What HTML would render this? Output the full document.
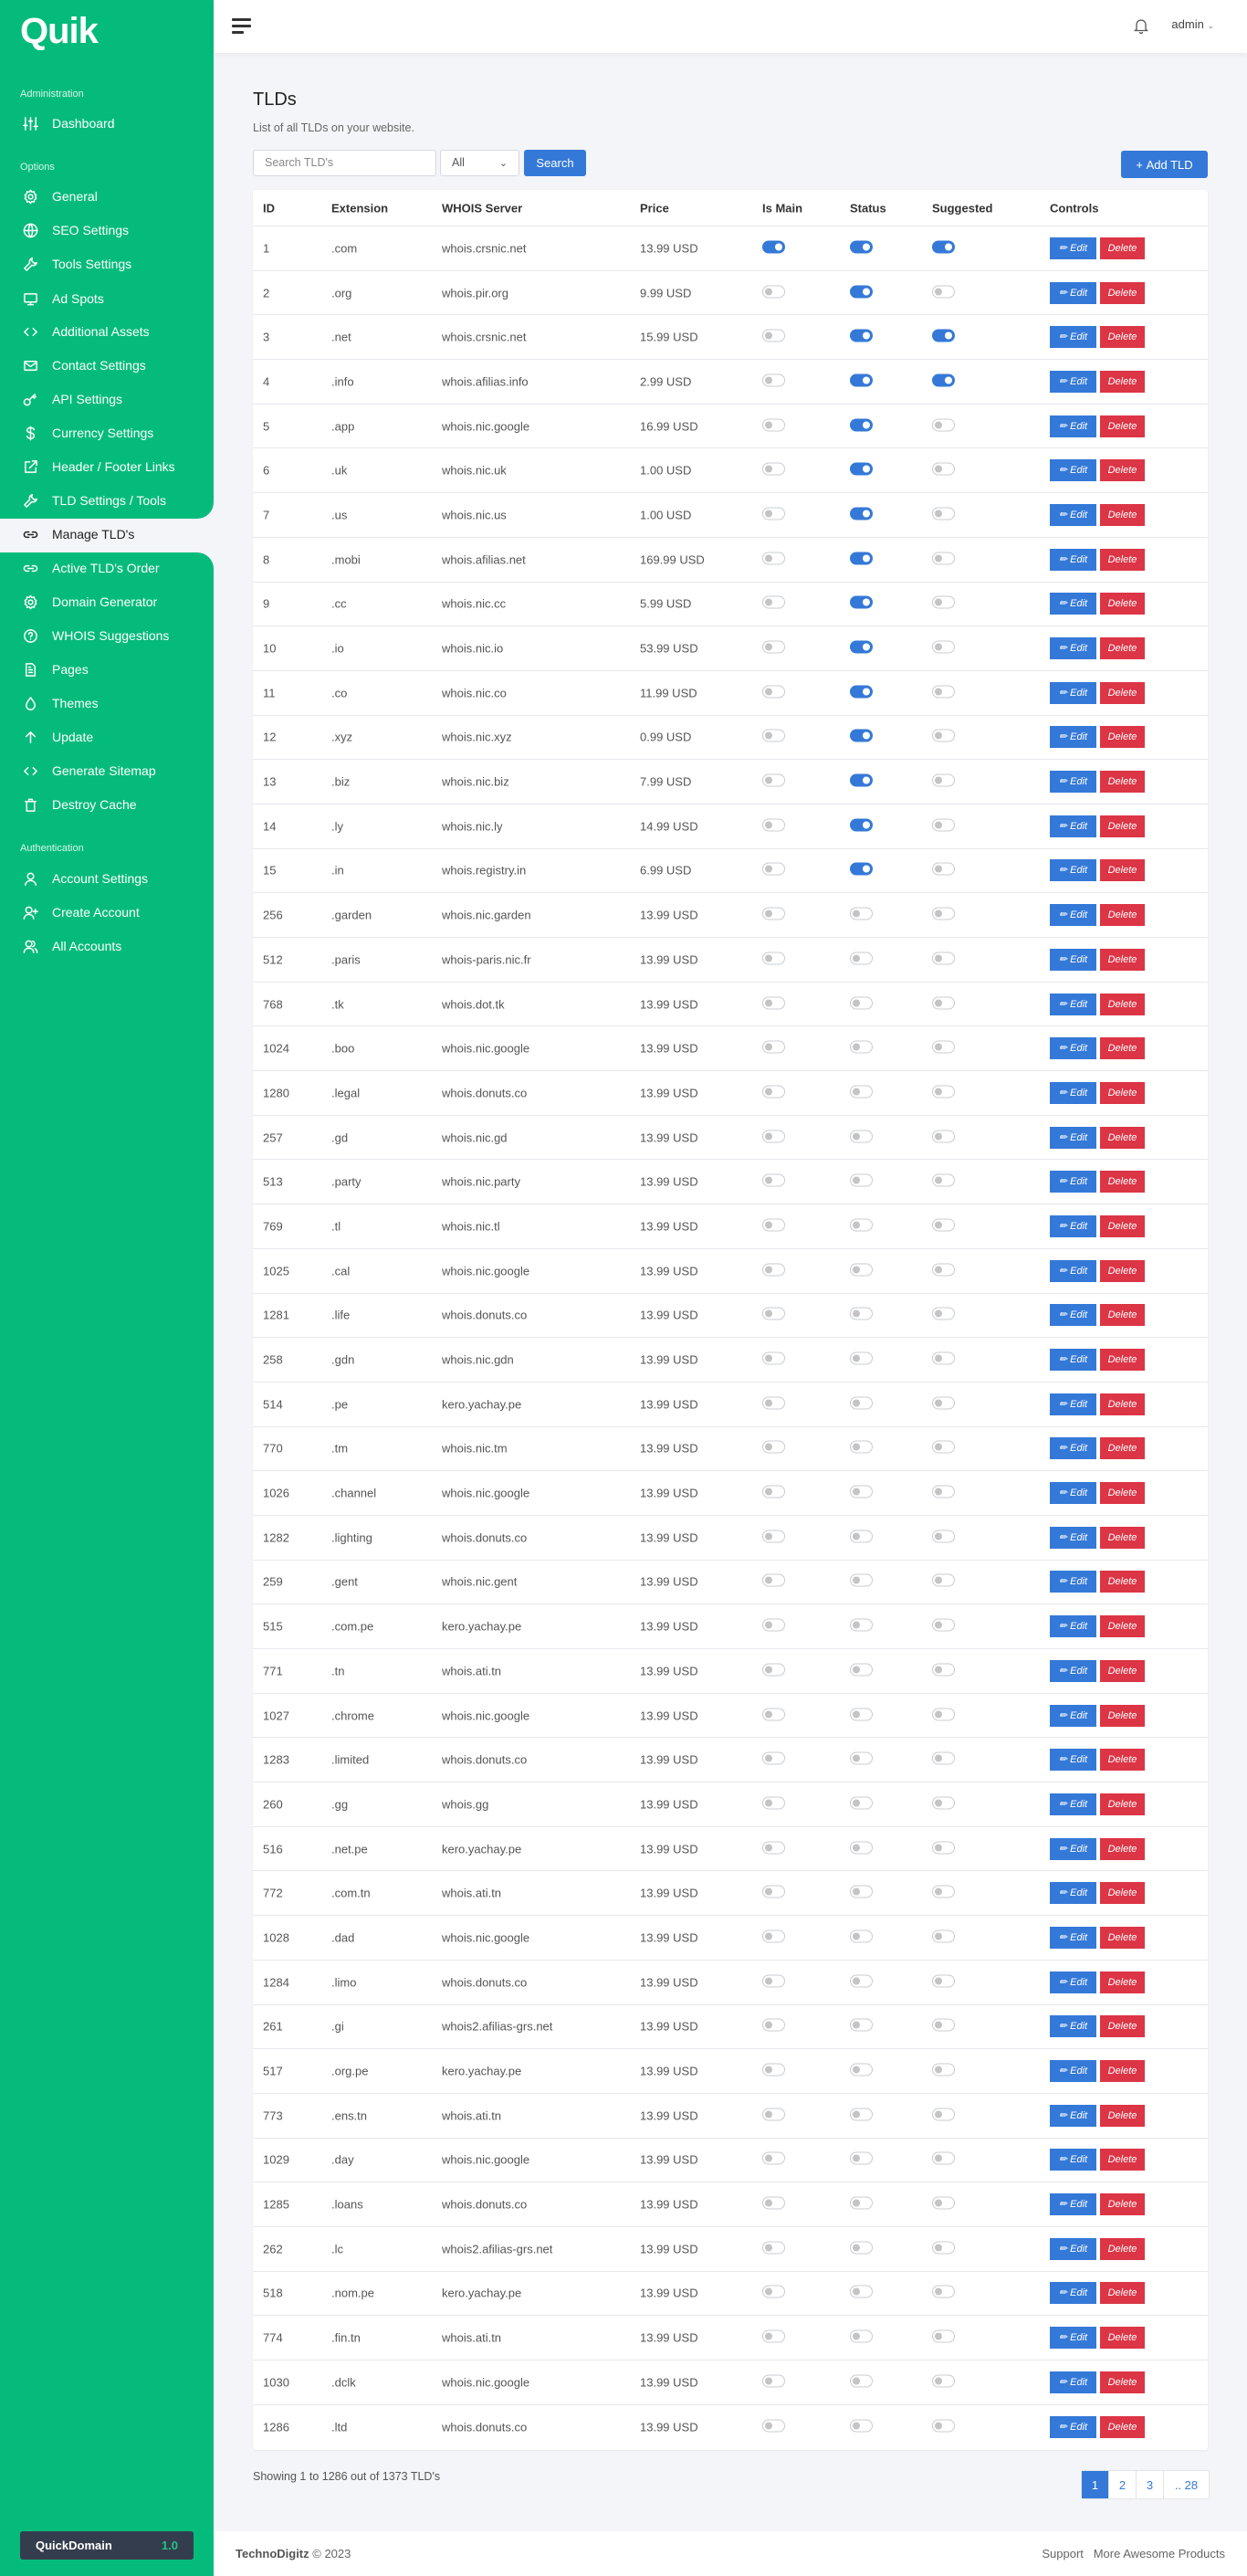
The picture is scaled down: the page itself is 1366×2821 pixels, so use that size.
<!DOCTYPE html>
<html><head><meta charset="utf-8">
<style>
*{box-sizing:border-box;margin:0;padding:0}
body{width:1366px;height:2821px;font-family:"Liberation Sans",sans-serif;background:#f4f5f8;position:relative;overflow:hidden;color:#444}
.side{position:absolute;left:0;top:0;width:234px;height:2821px;background:#f4f5f8}
.g1{position:absolute;left:0;top:0;width:234px;height:568px;background:#05bb7c;border-bottom-right-radius:18px}
.g2{position:absolute;left:0;top:605px;width:234px;height:2216px;background:#05bb7c;border-top-right-radius:18px}
.logo{position:absolute;left:22px;top:12px;font-size:40px;font-weight:bold;color:#fff;letter-spacing:-1px}
.lbl{position:absolute;left:22px;font-size:11px;color:#d8f5ea}
.it{position:absolute;left:25px;height:20px;font-size:14px;color:#fff;display:flex;align-items:center}
.it svg{width:17px;height:17px;margin-right:15px;fill:none;stroke:#fff;stroke-width:1.6;stroke-linecap:round;stroke-linejoin:round}
.it.act{color:#222}.it.act svg{stroke:#222}
.badge{position:absolute;left:22px;top:2772px;width:190px;height:31px;background:#343d4d;border-radius:3px;color:#fff;font-size:13px;font-weight:bold;display:flex;align-items:center;justify-content:space-between;padding:0 17px 0 17px}
.badge span{color:#22c38a}
.top{position:absolute;left:234px;top:0;width:1132px;height:58px;background:#fff;box-shadow:0 2px 6px rgba(0,0,0,.05)}
.ham{position:absolute;left:20px;top:20px}
.ham i{display:block;height:2.5px;background:#333;margin-bottom:4.5px;border-radius:1px}
.admin{position:absolute;right:36px;top:19px;font-size:13px;color:#444}
.bell{position:absolute;right:108px;top:19px}
h1{position:absolute;left:277px;top:98px;font-size:20px;font-weight:normal;color:#222}
.sub{position:absolute;left:277px;top:133px;font-size:12.5px;color:#666}
.inp{position:absolute;left:277px;top:164px;width:201px;height:29px;background:#fff;border:1px solid #d5d9df;border-radius:3px;font-size:12.5px;color:#888;padding:6px 12px}
.sel{position:absolute;left:482px;top:164px;width:87px;height:29px;background:#fff;border:1px solid #d5d9df;border-radius:3px;font-size:12.5px;color:#555;padding:6px 12px}
.sel b{position:absolute;right:12px;top:7px;font-weight:normal;font-size:11px}
.btn{position:absolute;background:#3479d8;color:#fff;border-radius:3px;font-size:13px;display:flex;align-items:center;justify-content:center}
.card{position:absolute;left:277px;top:208px;width:1046px;height:2475px;background:#fff;border-radius:3px;box-shadow:0 1px 2px rgba(0,0,0,.05)}
.hr{position:relative;height:40px;border-bottom:1px solid #e6e8ec;font-size:13px;font-weight:bold;color:#333}
.r{position:relative;height:48.7px;border-bottom:1px solid #e6e8ec;font-size:13px;color:#555}
.r:last-child{border-bottom:none}
.hr span,.r span{position:absolute;top:50%;transform:translateY(-50%);white-space:nowrap}
.c1{left:11px}.c2{left:86px}.c3{left:207px}.c4{left:424px}.c5{left:558px}.c6{left:654px}.c7{left:744px}.c8{left:873px}
.t{display:inline-block;width:25px;height:14px;border-radius:7px;border:1px solid #c9ccd1;background:#fff;position:relative}
.t::after{content:"";position:absolute;left:2px;top:2px;width:8px;height:8px;border-radius:50%;background:#c4c4c4}
.t.on{background:#3479d8;border-color:#3479d8}
.t.on::after{left:13px;background:#fff}
.ed,.de{display:inline-block;height:24px;line-height:24px;font-size:11px;color:#fff;vertical-align:middle;text-align:center}
.ed{width:51px;background:#3479d8}
.de{width:49px;background:#dc3545;margin-left:4px}
.show{position:absolute;left:277px;top:2705px;font-size:12.5px;color:#555}
.pg{position:absolute;left:1184px;top:2705px;height:32px;display:flex;border:1px solid #e1e4e8;border-radius:3px;background:#fff;font-size:13px;color:#3479d8}
.pg div{width:30px;display:flex;align-items:center;justify-content:center;border-left:1px solid #e1e4e8}
.pg div:first-child{background:#3479d8;color:#fff;border:none;width:29px}
.pg div:last-child{width:50px}
.foot{position:absolute;left:234px;top:2772px;width:1132px;height:49px;background:#fff;font-size:13px;color:#666}
</style></head><body>
<div class="side">
<div class="g1"></div><div class="g2"></div>
<div class="logo">Quik</div>
<div class="lbl" style="top:97px">Administration</div>
<div class="it" style="top:125px"><svg viewBox="0 0 18 18"><path d="M3 2v14M9 2v14M15 2v14M1 11h4M7 6h4M13 12h4"/></svg>Dashboard</div>
<div class="lbl" style="top:177px">Options</div>
<div class="it" style="top:205px"><svg viewBox="0 0 18 18"><circle cx="9" cy="9" r="2.5"/><path d="M9 1.5l1.5 2 2.5-.5.5 2.5 2 1.5-1 2 1 2-2 1.5-.5 2.5-2.5-.5L9 16.5l-1.5-2-2.5.5-.5-2.5-2-1.5 1-2-1-2 2-1.5.5-2.5 2.5.5z"/></svg>General</div>
<div class="it" style="top:242px"><svg viewBox="0 0 18 18"><circle cx="9" cy="9" r="7.5"/><path d="M1.5 9h15M9 1.5c3 3 3 12 0 15M9 1.5c-3 3-3 12 0 15"/></svg>SEO Settings</div>
<div class="it" style="top:279px"><svg viewBox="0 0 18 18"><path d="M11 2a4 4 0 0 0-3 5.5L2 13.5 4.5 16l6-6A4 4 0 0 0 16 7l-2.5 1L10 4.5z"/></svg>Tools Settings</div>
<div class="it" style="top:317px"><svg viewBox="0 0 18 18"><rect x="2" y="3" width="14" height="9.5" rx="1"/><path d="M9 12.5V15.5M6 15.5h6"/></svg>Ad Spots</div>
<div class="it" style="top:353px"><svg viewBox="0 0 18 18"><path d="M6 5L2 9l4 4M12 5l4 4-4 4"/></svg>Additional Assets</div>
<div class="it" style="top:390px"><svg viewBox="0 0 18 18"><rect x="2" y="4" width="14" height="10" rx="1"/><path d="M2 5l7 5 7-5"/></svg>Contact Settings</div>
<div class="it" style="top:427px"><svg viewBox="0 0 18 18"><circle cx="5" cy="12" r="3.5"/><path d="M7.5 9.5L14 3M11.5 5.5l2 2M13 4l2 2"/></svg>API Settings</div>
<div class="it" style="top:464px"><svg viewBox="0 0 18 18"><path d="M9 1.5v15M13 5c0-1.5-2-2.5-4-2.5S5 3.5 5 5.5 7 8 9 8.5s4 1 4 3.5-2 3-4 3-4-1-4-2.5"/></svg>Currency Settings</div>
<div class="it" style="top:501px"><svg viewBox="0 0 18 18"><path d="M8 3H3v12h12v-5M11 2h5v5M16 2L8 10"/></svg>Header / Footer Links</div>
<div class="it" style="top:538px"><svg viewBox="0 0 18 18"><path d="M11 2a4 4 0 0 0-3 5.5L2 13.5 4.5 16l6-6A4 4 0 0 0 16 7l-2.5 1L10 4.5z"/></svg>TLD Settings / Tools</div>
<div class="it act" style="top:575px"><svg viewBox="0 0 18 18"><path d="M7 6H4.5a3 3 0 0 0 0 6H7M11 6h2.5a3 3 0 0 1 0 6H11M6 9h6"/></svg>Manage TLD's</div>
<div class="it" style="top:612px"><svg viewBox="0 0 18 18"><path d="M7 6H4.5a3 3 0 0 0 0 6H7M11 6h2.5a3 3 0 0 1 0 6H11M6 9h6"/></svg>Active TLD's Order</div>
<div class="it" style="top:649px"><svg viewBox="0 0 18 18"><circle cx="9" cy="9" r="2.5"/><path d="M9 1.5l1.5 2 2.5-.5.5 2.5 2 1.5-1 2 1 2-2 1.5-.5 2.5-2.5-.5L9 16.5l-1.5-2-2.5.5-.5-2.5-2-1.5 1-2-1-2 2-1.5.5-2.5 2.5.5z"/></svg>Domain Generator</div>
<div class="it" style="top:686px"><svg viewBox="0 0 18 18"><circle cx="9" cy="9" r="7"/><path d="M7 7a2 2 0 1 1 2.5 2c-.5.2-.5.8-.5 1.5M9 12.8v.2"/></svg>WHOIS Suggestions</div>
<div class="it" style="top:723px"><svg viewBox="0 0 18 18"><path d="M4 2h7l3 3v11H4zM7 9h4M7 12h4M7 6h2"/></svg>Pages</div>
<div class="it" style="top:760px"><svg viewBox="0 0 18 18"><path d="M9 2C7 5 4 8 4 11a5 5 0 0 0 10 0c0-3-3-6-5-9z"/></svg>Themes</div>
<div class="it" style="top:797px"><svg viewBox="0 0 18 18"><path d="M9 15V3M4 8l5-5 5 5"/></svg>Update</div>
<div class="it" style="top:834px"><svg viewBox="0 0 18 18"><path d="M6 5L2 9l4 4M12 5l4 4-4 4"/></svg>Generate Sitemap</div>
<div class="it" style="top:871px"><svg viewBox="0 0 18 18"><path d="M3 5h12M4.5 5v11h9V5M7 5V2.5h4V5"/></svg>Destroy Cache</div>
<div class="lbl" style="top:923px">Authentication</div>
<div class="it" style="top:952px"><svg viewBox="0 0 18 18"><circle cx="9" cy="6" r="3.5"/><path d="M3 16c0-3 3-5 6-5s6 2 6 5"/></svg>Account Settings</div>
<div class="it" style="top:989px"><svg viewBox="0 0 18 18"><circle cx="7" cy="6" r="3.5"/><path d="M1.5 16c0-3 2.5-5 5.5-5s5.5 2 5.5 5M14.5 5v5M12 7.5h5"/></svg>Create Account</div>
<div class="it" style="top:1026px"><svg viewBox="0 0 18 18"><circle cx="7" cy="6" r="3.5"/><path d="M1.5 16c0-3 2.5-5 5.5-5s5.5 2 5.5 5M11.5 2.8a3.5 3.5 0 0 1 0 6.5M14 11.5c1.5.7 2.5 2.3 2.5 4.5"/></svg>All Accounts</div>
<div class="badge">QuickDomain<span>1.0</span></div>
</div>
<div class="top">
<div class="ham"><i style="width:21px"></i><i style="width:21px"></i><i style="width:13px"></i></div>
<svg class="bell" width="16" height="18" viewBox="0 0 16 18" fill="none" stroke="#555" stroke-width="1.3"><path d="M3 13V8a5 5 0 0 1 10 0v5l1.5 1.5h-13zM6.5 16a1.5 1.5 0 0 0 3 0"/></svg>
<div class="admin">admin <span style="font-size:9px;color:#777">&#8964;</span></div>
</div>
<h1>TLDs</h1>
<div class="sub">List of all TLDs on your website.</div>
<div class="inp">Search TLD's</div>
<div class="sel">All<b>&#8964;</b></div>
<div class="btn" style="left:574px;top:164px;width:68px;height:29px">Search</div>
<div class="btn" style="left:1228px;top:165px;width:95px;height:30px">+&nbsp;Add TLD</div>
<div class="card">
<div class="hr"><span class="c1">ID</span><span class="c2">Extension</span><span class="c3">WHOIS Server</span><span class="c4">Price</span><span class="c5">Is Main</span><span class="c6">Status</span><span class="c7">Suggested</span><span class="c8">Controls</span></div>
<div class="r"><span class="c1">1</span><span class="c2">.com</span><span class="c3">whois.crsnic.net</span><span class="c4">13.99 USD</span><span class="c5"><i class="t on"></i></span><span class="c6"><i class="t on"></i></span><span class="c7"><i class="t on"></i></span><span class="c8"><i class="ed">&#9999;&#xFE0E; Edit</i><i class="de">Delete</i></span></div>
<div class="r"><span class="c1">2</span><span class="c2">.org</span><span class="c3">whois.pir.org</span><span class="c4">9.99 USD</span><span class="c5"><i class="t"></i></span><span class="c6"><i class="t on"></i></span><span class="c7"><i class="t"></i></span><span class="c8"><i class="ed">&#9999;&#xFE0E; Edit</i><i class="de">Delete</i></span></div>
<div class="r"><span class="c1">3</span><span class="c2">.net</span><span class="c3">whois.crsnic.net</span><span class="c4">15.99 USD</span><span class="c5"><i class="t"></i></span><span class="c6"><i class="t on"></i></span><span class="c7"><i class="t on"></i></span><span class="c8"><i class="ed">&#9999;&#xFE0E; Edit</i><i class="de">Delete</i></span></div>
<div class="r"><span class="c1">4</span><span class="c2">.info</span><span class="c3">whois.afilias.info</span><span class="c4">2.99 USD</span><span class="c5"><i class="t"></i></span><span class="c6"><i class="t on"></i></span><span class="c7"><i class="t on"></i></span><span class="c8"><i class="ed">&#9999;&#xFE0E; Edit</i><i class="de">Delete</i></span></div>
<div class="r"><span class="c1">5</span><span class="c2">.app</span><span class="c3">whois.nic.google</span><span class="c4">16.99 USD</span><span class="c5"><i class="t"></i></span><span class="c6"><i class="t on"></i></span><span class="c7"><i class="t"></i></span><span class="c8"><i class="ed">&#9999;&#xFE0E; Edit</i><i class="de">Delete</i></span></div>
<div class="r"><span class="c1">6</span><span class="c2">.uk</span><span class="c3">whois.nic.uk</span><span class="c4">1.00 USD</span><span class="c5"><i class="t"></i></span><span class="c6"><i class="t on"></i></span><span class="c7"><i class="t"></i></span><span class="c8"><i class="ed">&#9999;&#xFE0E; Edit</i><i class="de">Delete</i></span></div>
<div class="r"><span class="c1">7</span><span class="c2">.us</span><span class="c3">whois.nic.us</span><span class="c4">1.00 USD</span><span class="c5"><i class="t"></i></span><span class="c6"><i class="t on"></i></span><span class="c7"><i class="t"></i></span><span class="c8"><i class="ed">&#9999;&#xFE0E; Edit</i><i class="de">Delete</i></span></div>
<div class="r"><span class="c1">8</span><span class="c2">.mobi</span><span class="c3">whois.afilias.net</span><span class="c4">169.99 USD</span><span class="c5"><i class="t"></i></span><span class="c6"><i class="t on"></i></span><span class="c7"><i class="t"></i></span><span class="c8"><i class="ed">&#9999;&#xFE0E; Edit</i><i class="de">Delete</i></span></div>
<div class="r"><span class="c1">9</span><span class="c2">.cc</span><span class="c3">whois.nic.cc</span><span class="c4">5.99 USD</span><span class="c5"><i class="t"></i></span><span class="c6"><i class="t on"></i></span><span class="c7"><i class="t"></i></span><span class="c8"><i class="ed">&#9999;&#xFE0E; Edit</i><i class="de">Delete</i></span></div>
<div class="r"><span class="c1">10</span><span class="c2">.io</span><span class="c3">whois.nic.io</span><span class="c4">53.99 USD</span><span class="c5"><i class="t"></i></span><span class="c6"><i class="t on"></i></span><span class="c7"><i class="t"></i></span><span class="c8"><i class="ed">&#9999;&#xFE0E; Edit</i><i class="de">Delete</i></span></div>
<div class="r"><span class="c1">11</span><span class="c2">.co</span><span class="c3">whois.nic.co</span><span class="c4">11.99 USD</span><span class="c5"><i class="t"></i></span><span class="c6"><i class="t on"></i></span><span class="c7"><i class="t"></i></span><span class="c8"><i class="ed">&#9999;&#xFE0E; Edit</i><i class="de">Delete</i></span></div>
<div class="r"><span class="c1">12</span><span class="c2">.xyz</span><span class="c3">whois.nic.xyz</span><span class="c4">0.99 USD</span><span class="c5"><i class="t"></i></span><span class="c6"><i class="t on"></i></span><span class="c7"><i class="t"></i></span><span class="c8"><i class="ed">&#9999;&#xFE0E; Edit</i><i class="de">Delete</i></span></div>
<div class="r"><span class="c1">13</span><span class="c2">.biz</span><span class="c3">whois.nic.biz</span><span class="c4">7.99 USD</span><span class="c5"><i class="t"></i></span><span class="c6"><i class="t on"></i></span><span class="c7"><i class="t"></i></span><span class="c8"><i class="ed">&#9999;&#xFE0E; Edit</i><i class="de">Delete</i></span></div>
<div class="r"><span class="c1">14</span><span class="c2">.ly</span><span class="c3">whois.nic.ly</span><span class="c4">14.99 USD</span><span class="c5"><i class="t"></i></span><span class="c6"><i class="t on"></i></span><span class="c7"><i class="t"></i></span><span class="c8"><i class="ed">&#9999;&#xFE0E; Edit</i><i class="de">Delete</i></span></div>
<div class="r"><span class="c1">15</span><span class="c2">.in</span><span class="c3">whois.registry.in</span><span class="c4">6.99 USD</span><span class="c5"><i class="t"></i></span><span class="c6"><i class="t on"></i></span><span class="c7"><i class="t"></i></span><span class="c8"><i class="ed">&#9999;&#xFE0E; Edit</i><i class="de">Delete</i></span></div>
<div class="r"><span class="c1">256</span><span class="c2">.garden</span><span class="c3">whois.nic.garden</span><span class="c4">13.99 USD</span><span class="c5"><i class="t"></i></span><span class="c6"><i class="t"></i></span><span class="c7"><i class="t"></i></span><span class="c8"><i class="ed">&#9999;&#xFE0E; Edit</i><i class="de">Delete</i></span></div>
<div class="r"><span class="c1">512</span><span class="c2">.paris</span><span class="c3">whois-paris.nic.fr</span><span class="c4">13.99 USD</span><span class="c5"><i class="t"></i></span><span class="c6"><i class="t"></i></span><span class="c7"><i class="t"></i></span><span class="c8"><i class="ed">&#9999;&#xFE0E; Edit</i><i class="de">Delete</i></span></div>
<div class="r"><span class="c1">768</span><span class="c2">.tk</span><span class="c3">whois.dot.tk</span><span class="c4">13.99 USD</span><span class="c5"><i class="t"></i></span><span class="c6"><i class="t"></i></span><span class="c7"><i class="t"></i></span><span class="c8"><i class="ed">&#9999;&#xFE0E; Edit</i><i class="de">Delete</i></span></div>
<div class="r"><span class="c1">1024</span><span class="c2">.boo</span><span class="c3">whois.nic.google</span><span class="c4">13.99 USD</span><span class="c5"><i class="t"></i></span><span class="c6"><i class="t"></i></span><span class="c7"><i class="t"></i></span><span class="c8"><i class="ed">&#9999;&#xFE0E; Edit</i><i class="de">Delete</i></span></div>
<div class="r"><span class="c1">1280</span><span class="c2">.legal</span><span class="c3">whois.donuts.co</span><span class="c4">13.99 USD</span><span class="c5"><i class="t"></i></span><span class="c6"><i class="t"></i></span><span class="c7"><i class="t"></i></span><span class="c8"><i class="ed">&#9999;&#xFE0E; Edit</i><i class="de">Delete</i></span></div>
<div class="r"><span class="c1">257</span><span class="c2">.gd</span><span class="c3">whois.nic.gd</span><span class="c4">13.99 USD</span><span class="c5"><i class="t"></i></span><span class="c6"><i class="t"></i></span><span class="c7"><i class="t"></i></span><span class="c8"><i class="ed">&#9999;&#xFE0E; Edit</i><i class="de">Delete</i></span></div>
<div class="r"><span class="c1">513</span><span class="c2">.party</span><span class="c3">whois.nic.party</span><span class="c4">13.99 USD</span><span class="c5"><i class="t"></i></span><span class="c6"><i class="t"></i></span><span class="c7"><i class="t"></i></span><span class="c8"><i class="ed">&#9999;&#xFE0E; Edit</i><i class="de">Delete</i></span></div>
<div class="r"><span class="c1">769</span><span class="c2">.tl</span><span class="c3">whois.nic.tl</span><span class="c4">13.99 USD</span><span class="c5"><i class="t"></i></span><span class="c6"><i class="t"></i></span><span class="c7"><i class="t"></i></span><span class="c8"><i class="ed">&#9999;&#xFE0E; Edit</i><i class="de">Delete</i></span></div>
<div class="r"><span class="c1">1025</span><span class="c2">.cal</span><span class="c3">whois.nic.google</span><span class="c4">13.99 USD</span><span class="c5"><i class="t"></i></span><span class="c6"><i class="t"></i></span><span class="c7"><i class="t"></i></span><span class="c8"><i class="ed">&#9999;&#xFE0E; Edit</i><i class="de">Delete</i></span></div>
<div class="r"><span class="c1">1281</span><span class="c2">.life</span><span class="c3">whois.donuts.co</span><span class="c4">13.99 USD</span><span class="c5"><i class="t"></i></span><span class="c6"><i class="t"></i></span><span class="c7"><i class="t"></i></span><span class="c8"><i class="ed">&#9999;&#xFE0E; Edit</i><i class="de">Delete</i></span></div>
<div class="r"><span class="c1">258</span><span class="c2">.gdn</span><span class="c3">whois.nic.gdn</span><span class="c4">13.99 USD</span><span class="c5"><i class="t"></i></span><span class="c6"><i class="t"></i></span><span class="c7"><i class="t"></i></span><span class="c8"><i class="ed">&#9999;&#xFE0E; Edit</i><i class="de">Delete</i></span></div>
<div class="r"><span class="c1">514</span><span class="c2">.pe</span><span class="c3">kero.yachay.pe</span><span class="c4">13.99 USD</span><span class="c5"><i class="t"></i></span><span class="c6"><i class="t"></i></span><span class="c7"><i class="t"></i></span><span class="c8"><i class="ed">&#9999;&#xFE0E; Edit</i><i class="de">Delete</i></span></div>
<div class="r"><span class="c1">770</span><span class="c2">.tm</span><span class="c3">whois.nic.tm</span><span class="c4">13.99 USD</span><span class="c5"><i class="t"></i></span><span class="c6"><i class="t"></i></span><span class="c7"><i class="t"></i></span><span class="c8"><i class="ed">&#9999;&#xFE0E; Edit</i><i class="de">Delete</i></span></div>
<div class="r"><span class="c1">1026</span><span class="c2">.channel</span><span class="c3">whois.nic.google</span><span class="c4">13.99 USD</span><span class="c5"><i class="t"></i></span><span class="c6"><i class="t"></i></span><span class="c7"><i class="t"></i></span><span class="c8"><i class="ed">&#9999;&#xFE0E; Edit</i><i class="de">Delete</i></span></div>
<div class="r"><span class="c1">1282</span><span class="c2">.lighting</span><span class="c3">whois.donuts.co</span><span class="c4">13.99 USD</span><span class="c5"><i class="t"></i></span><span class="c6"><i class="t"></i></span><span class="c7"><i class="t"></i></span><span class="c8"><i class="ed">&#9999;&#xFE0E; Edit</i><i class="de">Delete</i></span></div>
<div class="r"><span class="c1">259</span><span class="c2">.gent</span><span class="c3">whois.nic.gent</span><span class="c4">13.99 USD</span><span class="c5"><i class="t"></i></span><span class="c6"><i class="t"></i></span><span class="c7"><i class="t"></i></span><span class="c8"><i class="ed">&#9999;&#xFE0E; Edit</i><i class="de">Delete</i></span></div>
<div class="r"><span class="c1">515</span><span class="c2">.com.pe</span><span class="c3">kero.yachay.pe</span><span class="c4">13.99 USD</span><span class="c5"><i class="t"></i></span><span class="c6"><i class="t"></i></span><span class="c7"><i class="t"></i></span><span class="c8"><i class="ed">&#9999;&#xFE0E; Edit</i><i class="de">Delete</i></span></div>
<div class="r"><span class="c1">771</span><span class="c2">.tn</span><span class="c3">whois.ati.tn</span><span class="c4">13.99 USD</span><span class="c5"><i class="t"></i></span><span class="c6"><i class="t"></i></span><span class="c7"><i class="t"></i></span><span class="c8"><i class="ed">&#9999;&#xFE0E; Edit</i><i class="de">Delete</i></span></div>
<div class="r"><span class="c1">1027</span><span class="c2">.chrome</span><span class="c3">whois.nic.google</span><span class="c4">13.99 USD</span><span class="c5"><i class="t"></i></span><span class="c6"><i class="t"></i></span><span class="c7"><i class="t"></i></span><span class="c8"><i class="ed">&#9999;&#xFE0E; Edit</i><i class="de">Delete</i></span></div>
<div class="r"><span class="c1">1283</span><span class="c2">.limited</span><span class="c3">whois.donuts.co</span><span class="c4">13.99 USD</span><span class="c5"><i class="t"></i></span><span class="c6"><i class="t"></i></span><span class="c7"><i class="t"></i></span><span class="c8"><i class="ed">&#9999;&#xFE0E; Edit</i><i class="de">Delete</i></span></div>
<div class="r"><span class="c1">260</span><span class="c2">.gg</span><span class="c3">whois.gg</span><span class="c4">13.99 USD</span><span class="c5"><i class="t"></i></span><span class="c6"><i class="t"></i></span><span class="c7"><i class="t"></i></span><span class="c8"><i class="ed">&#9999;&#xFE0E; Edit</i><i class="de">Delete</i></span></div>
<div class="r"><span class="c1">516</span><span class="c2">.net.pe</span><span class="c3">kero.yachay.pe</span><span class="c4">13.99 USD</span><span class="c5"><i class="t"></i></span><span class="c6"><i class="t"></i></span><span class="c7"><i class="t"></i></span><span class="c8"><i class="ed">&#9999;&#xFE0E; Edit</i><i class="de">Delete</i></span></div>
<div class="r"><span class="c1">772</span><span class="c2">.com.tn</span><span class="c3">whois.ati.tn</span><span class="c4">13.99 USD</span><span class="c5"><i class="t"></i></span><span class="c6"><i class="t"></i></span><span class="c7"><i class="t"></i></span><span class="c8"><i class="ed">&#9999;&#xFE0E; Edit</i><i class="de">Delete</i></span></div>
<div class="r"><span class="c1">1028</span><span class="c2">.dad</span><span class="c3">whois.nic.google</span><span class="c4">13.99 USD</span><span class="c5"><i class="t"></i></span><span class="c6"><i class="t"></i></span><span class="c7"><i class="t"></i></span><span class="c8"><i class="ed">&#9999;&#xFE0E; Edit</i><i class="de">Delete</i></span></div>
<div class="r"><span class="c1">1284</span><span class="c2">.limo</span><span class="c3">whois.donuts.co</span><span class="c4">13.99 USD</span><span class="c5"><i class="t"></i></span><span class="c6"><i class="t"></i></span><span class="c7"><i class="t"></i></span><span class="c8"><i class="ed">&#9999;&#xFE0E; Edit</i><i class="de">Delete</i></span></div>
<div class="r"><span class="c1">261</span><span class="c2">.gi</span><span class="c3">whois2.afilias-grs.net</span><span class="c4">13.99 USD</span><span class="c5"><i class="t"></i></span><span class="c6"><i class="t"></i></span><span class="c7"><i class="t"></i></span><span class="c8"><i class="ed">&#9999;&#xFE0E; Edit</i><i class="de">Delete</i></span></div>
<div class="r"><span class="c1">517</span><span class="c2">.org.pe</span><span class="c3">kero.yachay.pe</span><span class="c4">13.99 USD</span><span class="c5"><i class="t"></i></span><span class="c6"><i class="t"></i></span><span class="c7"><i class="t"></i></span><span class="c8"><i class="ed">&#9999;&#xFE0E; Edit</i><i class="de">Delete</i></span></div>
<div class="r"><span class="c1">773</span><span class="c2">.ens.tn</span><span class="c3">whois.ati.tn</span><span class="c4">13.99 USD</span><span class="c5"><i class="t"></i></span><span class="c6"><i class="t"></i></span><span class="c7"><i class="t"></i></span><span class="c8"><i class="ed">&#9999;&#xFE0E; Edit</i><i class="de">Delete</i></span></div>
<div class="r"><span class="c1">1029</span><span class="c2">.day</span><span class="c3">whois.nic.google</span><span class="c4">13.99 USD</span><span class="c5"><i class="t"></i></span><span class="c6"><i class="t"></i></span><span class="c7"><i class="t"></i></span><span class="c8"><i class="ed">&#9999;&#xFE0E; Edit</i><i class="de">Delete</i></span></div>
<div class="r"><span class="c1">1285</span><span class="c2">.loans</span><span class="c3">whois.donuts.co</span><span class="c4">13.99 USD</span><span class="c5"><i class="t"></i></span><span class="c6"><i class="t"></i></span><span class="c7"><i class="t"></i></span><span class="c8"><i class="ed">&#9999;&#xFE0E; Edit</i><i class="de">Delete</i></span></div>
<div class="r"><span class="c1">262</span><span class="c2">.lc</span><span class="c3">whois2.afilias-grs.net</span><span class="c4">13.99 USD</span><span class="c5"><i class="t"></i></span><span class="c6"><i class="t"></i></span><span class="c7"><i class="t"></i></span><span class="c8"><i class="ed">&#9999;&#xFE0E; Edit</i><i class="de">Delete</i></span></div>
<div class="r"><span class="c1">518</span><span class="c2">.nom.pe</span><span class="c3">kero.yachay.pe</span><span class="c4">13.99 USD</span><span class="c5"><i class="t"></i></span><span class="c6"><i class="t"></i></span><span class="c7"><i class="t"></i></span><span class="c8"><i class="ed">&#9999;&#xFE0E; Edit</i><i class="de">Delete</i></span></div>
<div class="r"><span class="c1">774</span><span class="c2">.fin.tn</span><span class="c3">whois.ati.tn</span><span class="c4">13.99 USD</span><span class="c5"><i class="t"></i></span><span class="c6"><i class="t"></i></span><span class="c7"><i class="t"></i></span><span class="c8"><i class="ed">&#9999;&#xFE0E; Edit</i><i class="de">Delete</i></span></div>
<div class="r"><span class="c1">1030</span><span class="c2">.dclk</span><span class="c3">whois.nic.google</span><span class="c4">13.99 USD</span><span class="c5"><i class="t"></i></span><span class="c6"><i class="t"></i></span><span class="c7"><i class="t"></i></span><span class="c8"><i class="ed">&#9999;&#xFE0E; Edit</i><i class="de">Delete</i></span></div>
<div class="r"><span class="c1">1286</span><span class="c2">.ltd</span><span class="c3">whois.donuts.co</span><span class="c4">13.99 USD</span><span class="c5"><i class="t"></i></span><span class="c6"><i class="t"></i></span><span class="c7"><i class="t"></i></span><span class="c8"><i class="ed">&#9999;&#xFE0E; Edit</i><i class="de">Delete</i></span></div>
</div>
<div class="show">Showing 1 to 1286 out of 1373 TLD's</div>
<div class="pg"><div>1</div><div>2</div><div>3</div><div>.. 28</div></div>
<div class="foot"><span style="position:absolute;left:24px;top:17px"><b style="color:#555">TechnoDigitz</b> © 2023</span><span style="position:absolute;right:24px;top:17px">Support &nbsp; More Awesome Products</span></div>
</body></html>
